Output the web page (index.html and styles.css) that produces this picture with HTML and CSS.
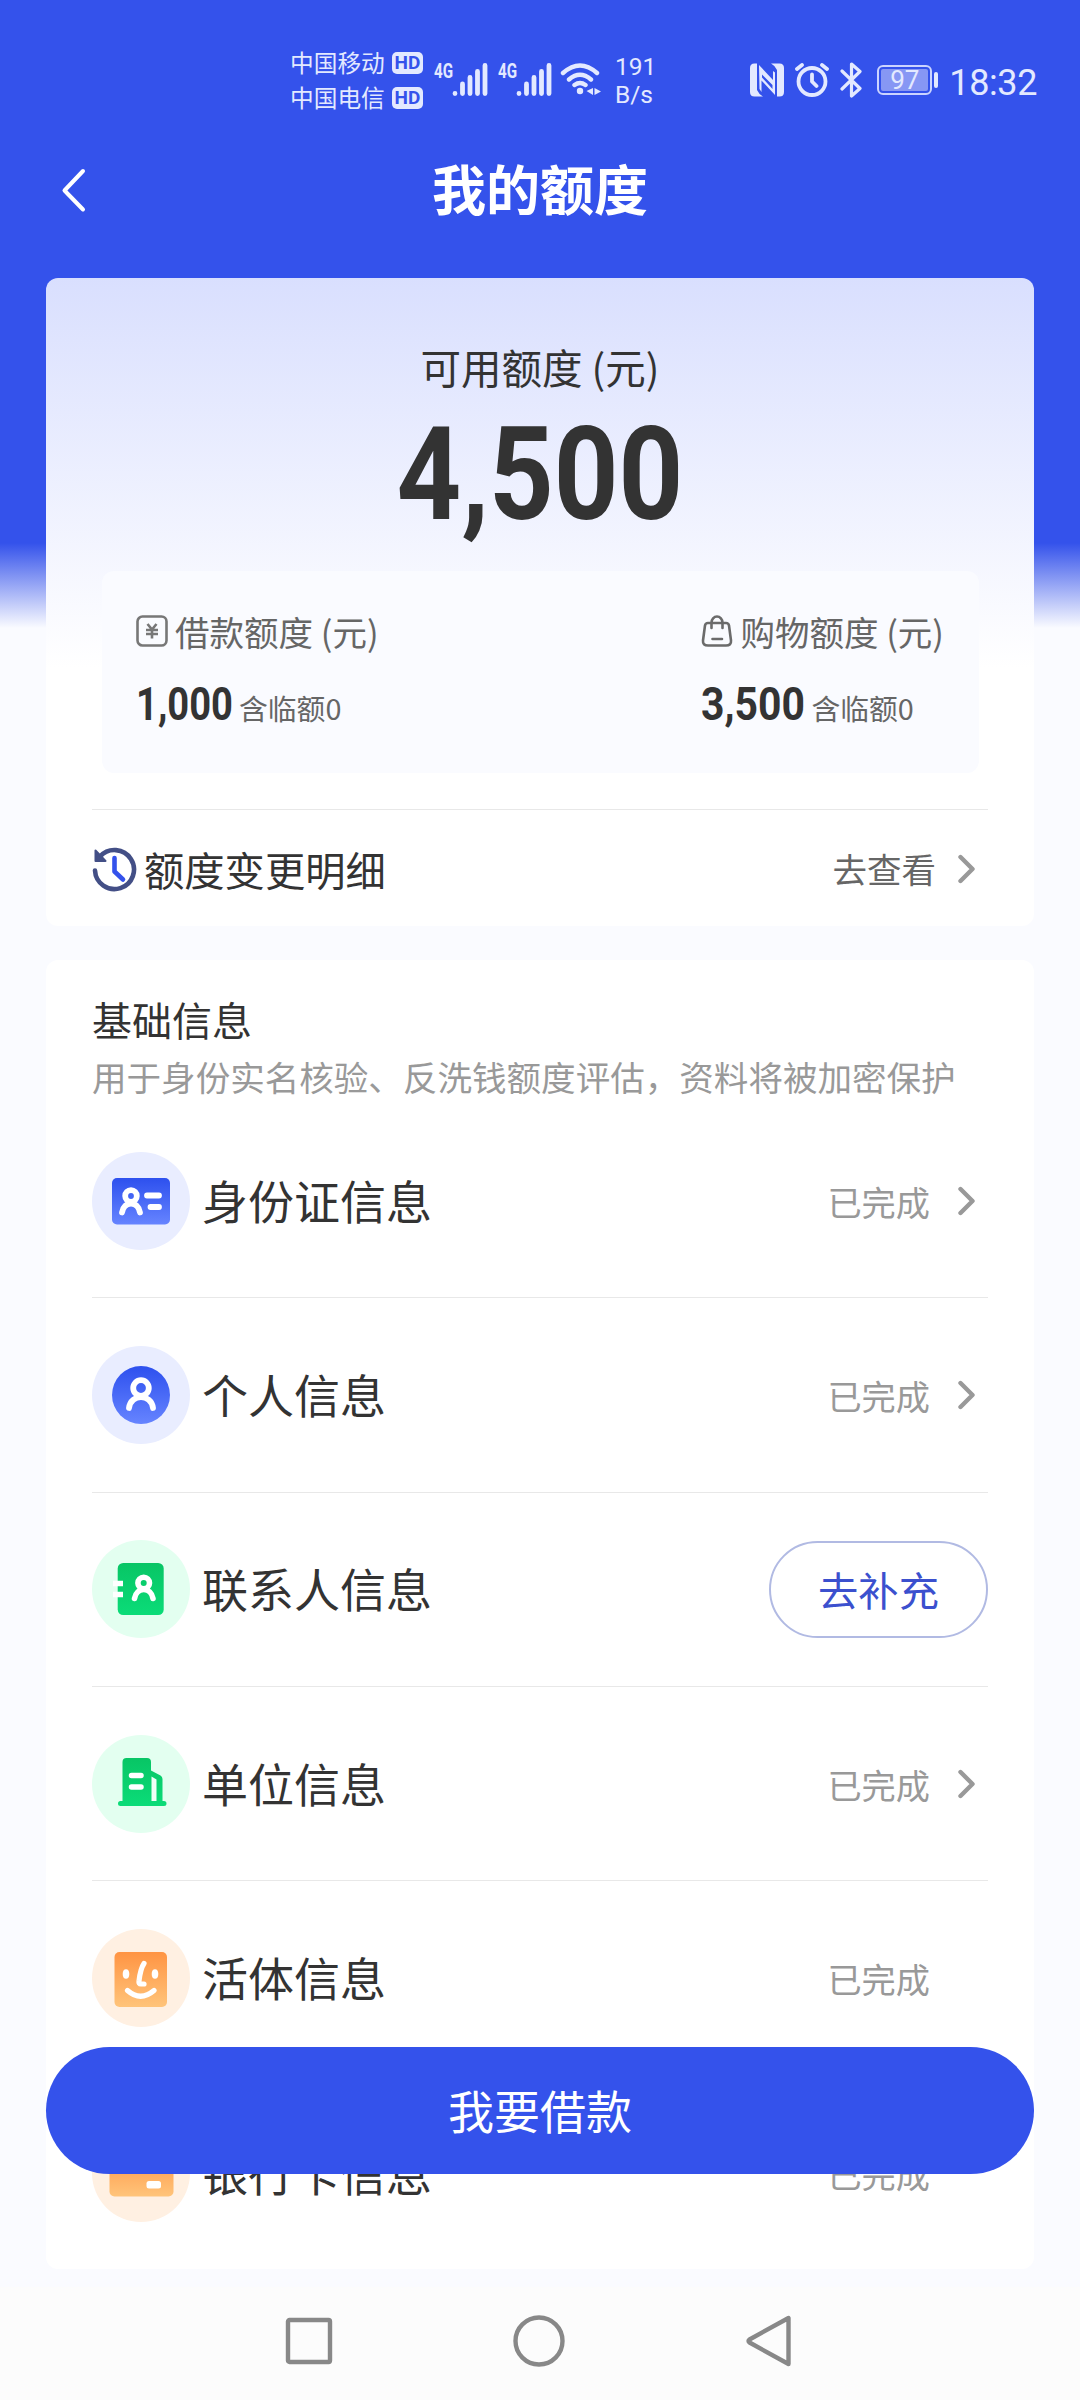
FILE: index.html
```html
<!DOCTYPE html>
<html lang="zh-CN">
<head>
<meta charset="utf-8">
<title>我的额度</title>
<link rel="stylesheet" href="styles.css">
</head>
<body>
<svg class="defs" width="0" height="0" aria-hidden="true">
  <defs>
    <linearGradient id="blue" x1="0" y1="0" x2="0" y2="1"><stop offset="0" stop-color="#2d50ee"/><stop offset="1" stop-color="#6684ff"/></linearGradient>
    <linearGradient id="green" x1="0" y1="0" x2="0" y2="1"><stop offset="0" stop-color="#08c565"/><stop offset="1" stop-color="#0bdc78"/></linearGradient>
    <linearGradient id="orange" x1="0" y1="0" x2="0" y2="1"><stop offset="0" stop-color="#ff9443"/><stop offset="1" stop-color="#ffc47a"/></linearGradient>
    <symbol id="signal" viewBox="0 0 36 34"><path d="M3 31.500v.01M10.500 22v9.500M18 15.500v16M25.500 9.500v22M33 3.500v28" fill="none" stroke="currentColor" stroke-width="4.800" stroke-linecap="round"/></symbol>
    <symbol id="chevron" viewBox="0 0 20 30"><path d="M3.500 3l12 12-12 12" fill="none" stroke="currentColor" stroke-width="4.400" stroke-linecap="round" stroke-linejoin="round"/></symbol>
  </defs>
</svg>
<div class="screen">
  <header class="statusbar">
    <div class="carriers">
      <div class="carrier">中国移动<span class="hd">HD</span></div>
      <div class="carrier">中国电信<span class="hd">HD</span></div>
    </div>
    <div class="cell"><span class="gen">4G</span><svg width="36" height="34"><use href="#signal"/></svg></div>
    <div class="cell second"><span class="gen">4G</span><svg width="36" height="34"><use href="#signal"/></svg></div>
    <svg class="wifi" width="42" height="34" viewBox="0 0 42 34" fill="none" stroke="currentColor" stroke-width="4.400" stroke-linecap="round">
      <path d="M3 11q17-15 34 0M9 17.500q11-9.500 22 0M14.500 23q5.500-4 11 0"/>
      <circle cx="20" cy="29" r="3.200" fill="currentColor" stroke="none"/>
      <path d="M33 26v7l-6.500-4zM34.500 33v-7l6.500 3.500z" fill="currentColor" stroke="none"/>
    </svg>
    <div class="speed"><span>191</span><span>B/s</span></div>
    <div class="right">
      <svg width="34" height="34" viewBox="0 0 34 34" fill="currentColor">
        <path d="M4.500 0.500H7V27q2 4.500 6 6.500H4.500Q0 33.500 0 29V5Q0 .5 4.500.5zM29.500 33.500H27V7q-2-4.500-6-6.500h8.500Q34 .5 34 5v24q0 4.500-4.500 4.500z"/>
        <path d="M9 2l14 15v-9l2 1.500V32L11.500 17.500V29L9.500 26zM12 11.500v3l10.500 11.500v-4z"/>
      </svg>
      <svg class="alarm" width="34" height="34" viewBox="0 0 34 34" fill="none" stroke="currentColor" stroke-width="3.800" stroke-linecap="round" stroke-linejoin="round">
        <circle cx="17" cy="18.500" r="13.500"/><path d="M17 11.500v7l4.500 4.500M2 6l5-4M32 6l-5-4"/>
      </svg>
      <svg class="bt" width="23" height="36" viewBox="0 0 23 36" fill="none" stroke="currentColor" stroke-width="3.200" stroke-linejoin="round" stroke-linecap="round">
        <path d="M2 9l18 17.500-8.500 7.500V2L20 9.500 2 27"/>
      </svg>
      <div class="battery"><span>97</span></div>
      <span class="clock">18:32</span>
    </div>
  </header>

  <nav class="titlebar">
    <svg class="back" width="27" height="46" viewBox="0 0 27 46"><path d="M23 4L4.500 23.500l18.500 19" fill="none" stroke="#fff" stroke-width="4" stroke-linecap="round" stroke-linejoin="round"/></svg>
    <h1>我的额度</h1>
  </nav>

  <main>
    <section class="card quota">
      <div class="quota-label">可用额度 (元)</div>
      <div class="quota-value"><span>4,500</span></div>
      <div class="split">
        <div class="part">
          <div class="part-label">
            <svg width="32" height="32" viewBox="0 0 32 32" fill="none" stroke="#777" stroke-width="2.600"><rect x="1.500" y="1.500" width="29" height="29" rx="5"/><path d="M11.500 9l4.500 5.500L20.500 9M16 14v9.500M10 15h12M10 19h12" stroke-width="2.600"/></svg>
            借款额度 (元)
          </div>
          <div class="part-value"><b class="loan"><span>1,000</span></b><small>含临额0</small></div>
        </div>
        <div class="part">
          <div class="part-label">
            <svg width="32" height="32" viewBox="0 0 32 32" fill="none" stroke="#6b6b6b" stroke-width="2.600" stroke-linecap="round"><path d="M7 8h18q2.500 0 3 2.500l2 15q.5 5-5 5H7q-5.500 0-5-5l2-15Q4.500 8 7 8zM10.500 13V7.500a5.500 6 0 0 1 11 0V13M11.500 24h9.500"/></svg>
            购物额度 (元)
          </div>
          <div class="part-value"><b class="shop"><span>3,500</span></b><small>含临额0</small></div>
        </div>
      </div>
      <div class="history">
        <svg class="clock-icon" width="45" height="46" viewBox="0 0 45 46" fill="none" stroke-linecap="round" stroke-linejoin="round">
          <path d="M3 24.500A19.500 19.500 0 1 0 8 10.500" stroke="#434f86" stroke-width="4.600"/>
          <path d="M3.500 4.500v10.500h10z" fill="#434f86" stroke="#434f86" stroke-width="2"/>
          <path d="M22.500 12v13.500l8.500 8" stroke="#3452eb" stroke-width="4.600"/>
        </svg>
        <span class="history-label">额度变更明细</span>
        <span class="history-go">去查看</span>
        <svg class="chev" width="20" height="30"><use href="#chevron"/></svg>
      </div>
    </section>

    <section class="card info">
      <h2>基础信息</h2>
      <p>用于身份实名核验、反洗钱额度评估，资料将被加密保护</p>
      <ul class="rows">
        <li class="row">
          <svg width="98" height="98" viewBox="0 0 98 98"><circle cx="49" cy="49" r="49" fill="#e9edff"/><rect x="20" y="26" width="58" height="46.500" rx="5" fill="url(#blue)"/><g fill="none" stroke="#fff" stroke-width="5.800" stroke-linecap="round"><circle cx="39" cy="44" r="5.800"/><path d="M30 60.500C32 48.500 46 48.500 48 60.500M55 43.500h12M58.500 55h8.500"/></g></svg>
          <span class="name">身份证信息</span><span class="done">已完成</span><svg class="chev" width="20" height="30"><use href="#chevron"/></svg>
        </li>
        <li class="row">
          <svg width="98" height="98" viewBox="0 0 98 98"><circle cx="49" cy="49" r="49" fill="#e9edff"/><circle cx="49" cy="49" r="29" fill="url(#blue)"/><g fill="none" stroke="#fff" stroke-width="5.800" stroke-linecap="round"><circle cx="49" cy="42" r="7.800"/><path d="M37 62C39 47.500 59 47.500 61 62"/></g></svg>
          <span class="name">个人信息</span><span class="done">已完成</span><svg class="chev" width="20" height="30"><use href="#chevron"/></svg>
        </li>
        <li class="row">
          <svg width="98" height="98" viewBox="0 0 98 98"><circle cx="49" cy="49" r="49" fill="#e3fff0"/><rect x="25.700" y="23" width="46" height="52" rx="5.500" fill="url(#green)"/><g fill="none" stroke="#fff" stroke-width="5.600" stroke-linecap="round"><circle cx="51.700" cy="43" r="5.800"/><path d="M42.500 58.500C44.500 46.500 59 46.500 61 58.500"/><path d="M21 43.500h10M21 54.500h10" stroke-linecap="butt"/></g></svg>
          <span class="name">联系人信息</span><span class="fill">去补充</span>
        </li>
        <li class="row">
          <svg width="98" height="98" viewBox="0 0 98 98"><circle cx="49" cy="49" r="49" fill="#e3fff0"/><path d="M30.500 66V27q0-4 4-4h20.500q4 0 4 4v8.500l9.500 5q2 1.200 2 3.500v22h1.500a2.500 2.500 0 0 1 0 5h-43.500a2.500 2.500 0 0 1 0-5z" fill="url(#green)"/><path d="M59.500 41.500l5 3V66h-5z" fill="#f0fff7"/><path d="M39.500 40.500h9.500M39.500 52h9.500" stroke="#fff" stroke-width="5.500" stroke-linecap="round"/></svg>
          <span class="name">单位信息</span><span class="done">已完成</span><svg class="chev" width="20" height="30"><use href="#chevron"/></svg>
        </li>
        <li class="row">
          <svg width="98" height="98" viewBox="0 0 98 98"><circle cx="49" cy="49" r="49" fill="#fff0e2"/><rect x="22.500" y="23" width="52.500" height="55" rx="5" fill="url(#orange)"/><g fill="#fff"><ellipse cx="34" cy="45" rx="3.300" ry="4.700"/><ellipse cx="63" cy="45" rx="3.300" ry="4.700"/></g><path d="M52 34.500q-3.500 5-5 17.500-.5 3 2 3h3M35.500 61.500q13 11.500 26.500 0" fill="none" stroke="#fff" stroke-width="5.200" stroke-linecap="round" stroke-linejoin="round"/></svg>
          <span class="name">活体信息</span><span class="done">已完成</span><span class="chev blank"></span>
        </li>
        <li class="row">
          <svg width="98" height="98" viewBox="0 0 98 98"><circle cx="49" cy="49" r="49" fill="#fff0e2"/><rect x="17.500" y="26" width="64" height="46.500" rx="5" fill="url(#orange)"/><rect x="54.500" y="57" width="14.500" height="7.500" rx="2.500" fill="#fff"/></svg>
          <span class="name">银行卡信息</span><span class="done">已完成</span><span class="chev blank"></span>
        </li>
      </ul>
    </section>
  </main>

  <footer class="sysnav">
    <svg width="48" height="48" viewBox="0 0 48 48" fill="none" stroke="#888" stroke-width="4.400"><rect x="3" y="3" width="42" height="42" rx="1.500"/></svg>
    <svg width="52" height="52" viewBox="0 0 52 52" fill="none" stroke="#888" stroke-width="4.400"><circle cx="26" cy="26" r="23.500"/></svg>
    <svg width="48" height="54" viewBox="0 0 48 54" fill="none" stroke="#888" stroke-width="4.400" stroke-linejoin="round"><path d="M43.500 4v46L4.500 28.500q-2-1.500 0-3z"/></svg>
  </footer>
  <button class="borrow">我要借款</button>
</div>
</body>
</html>
```
FILE: styles.css
```css
* { box-sizing: border-box; }
body {
  margin: 0;
  font-family: "Noto Sans CJK SC", sans-serif;
  color: #333;
}
.defs { position: absolute; }
svg { display: block; flex: none; }
.screen {
  position: relative;
  display: flex;
  flex-direction: column;
  width: 1080px;
  height: 2400px;
  overflow: hidden;
  white-space: nowrap;
  background: linear-gradient(#3452eb 0, #3452eb 543px, #fafbff 628px);
}

/* system status bar */
.statusbar {
  display: flex;
  align-items: flex-start;
  height: 140px;
  padding: 0 0 0 290px;
  color: #e3e9ff;
}
.carriers { width: 133px; padding-top: 45px; }
.carrier {
  display: flex;
  align-items: center;
  justify-content: space-between;
  height: 35px;
  font-size: 23.700px;
  line-height: 35px;
}
.hd {
  width: 31px;
  height: 22px;
  border-radius: 5px;
  background: #e3e9ff;
  color: #3452eb;
  font: 700 19px/22px Roboto, sans-serif;
  text-align: center;
}
.cell { display: flex; margin: 62px 0 0 11px; }
.cell.second { margin-left: 10px; }
.cell svg { margin-left: -2px; }
.gen {
  width: 20px;
  font: 700 20px/18px Roboto, sans-serif;
  letter-spacing: 0;
  transform: scaleX(.76);
  transform-origin: left;
}
.wifi { margin: 62px 0 0 8px; }
.speed {
  display: flex;
  flex-direction: column;
  margin: 53px 0 0 13px;
  font: 24.500px/28px Roboto, sans-serif;
}
.right {
  display: flex;
  align-items: center;
  height: 36px;
  margin: 62px 43px 0 auto;
}
.alarm { margin-left: 11px; }
.bt { margin-left: 11px; }
.battery {
  position: relative;
  width: 55px;
  height: 30px;
  margin-left: 14px;
  padding: 2px;
  border: 2px solid #cbd4ff;
  border-radius: 6px;
  font: 26px/22px Roboto, sans-serif;
  text-align: center;
}
.battery span { display: block; background: #8797f4; height: 22px; border-radius: 2px; }
.battery::after {
  content: "";
  position: absolute;
  left: 55px;
  top: 5px;
  width: 4px;
  height: 16px;
  border-radius: 2px;
  background: #e3e9ff;
}
.clock { margin: 5px 0 0 17px; font: 36px/36px Roboto, sans-serif; letter-spacing: -.4px; }

/* page title */
.titlebar {
  display: grid;
  grid-template-columns: 100px 1fr 100px;
  align-items: center;
  height: 100px;
}
.back { margin-left: 60px; }
h1 { margin: -4px 0 0; font-size: 54px; line-height: 80px; font-weight: 700; color: #fff; text-align: center; }

main { display: flex; flex-direction: column; gap: 34px; padding: 38px 46px 18px; }
.card { border-radius: 12px; background: #fff; }

/* quota summary */
.quota { height: 648px; padding: 59px 46px 0; background: linear-gradient(#d9dffe 0, #fff 390px); }
.quota-label { font-size: 40.500px; line-height: 60px; text-align: center; }
.quota-value {
  display: flex;
  justify-content: center;
  height: 129px;
  margin-top: 13px;
  font: 700 129px/129px Roboto, sans-serif;
}
.quota-value span { transform: scaleX(.875); }
.split {
  display: flex;
  justify-content: space-between;
  height: 202px;
  margin: 32px 9px 0 10px;
  padding: 35px 35px 0 34px;
  border-radius: 12px;
  background: #fafbff;
}
.part-label {
  display: flex;
  align-items: center;
  gap: 7px;
  font-size: 34.500px;
  line-height: 50px;
  color: #666;
}
.part-label svg { margin-top: -1px; }
.part-value { display: flex; align-items: baseline; margin-top: 23px; line-height: 50px; }
.part-value b { font: 700 46.500px/50px Roboto, sans-serif; }
.part-value b span { display: inline-block; transform: scaleX(.88); transform-origin: left; }
.part-value .loan { width: 103px; }
.part-value .loan span { transform: scaleX(.82); }
.part-value .shop { width: 110px; }
.part-value small { font-size: 28.800px; color: #666; }
.history {
  display: flex;
  align-items: center;
  height: 118px;
  margin-top: 36px;
  border-top: 1px solid #e8e8e8;
}
.history-label { margin: -1px 0 0 7px; font-size: 40.300px; }
.history-go { margin: -1px 0 0 auto; font-size: 34.500px; color: #666; }
.chev { width: 20px; margin: 0 11px 0 21px; color: #999; }

/* information list */
.info { height: 1309px; padding: 29px 46px 0; }
h2 { margin: 0; font-size: 40px; line-height: 60px; font-weight: 400; }
p { margin: 0; font-size: 34.550px; line-height: 54px; color: #999; }
.rows { margin: 0; padding: 1px 0 0; list-style: none; }
.row {
  display: flex;
  align-items: center;
  height: 194.300px;
  border-bottom: 1px solid #e8e8e8;
}
.row:last-child { border-bottom: 0; }
.name { margin: -4px auto 0 12px; font-size: 46px; }
.done { font-size: 34.200px; color: #999; }
.row .chev { margin-left: 27px; }
.fill {
  width: 219px;
  height: 97px;
  border: 2px solid #b1bae3;
  border-radius: 49px;
  font-size: 40.300px;
  line-height: 91px;
  color: #3b50ce;
  text-align: center;
}

/* floating call to action */
.borrow {
  position: absolute;
  left: 46px;
  top: 2047px;
  width: 988px;
  height: 127px;
  padding: 0 0 3px;
  border: 0;
  border-radius: 64px;
  background: #3452eb;
  color: #fff;
  font: 46px "Noto Sans CJK SC", sans-serif;
}

/* system navigation */
.sysnav {
  display: flex;
  flex: 1;
  align-items: center;
  justify-content: space-between;
  padding: 0 287px 6px 285px;
  background: #fcfcfc;
}
```
